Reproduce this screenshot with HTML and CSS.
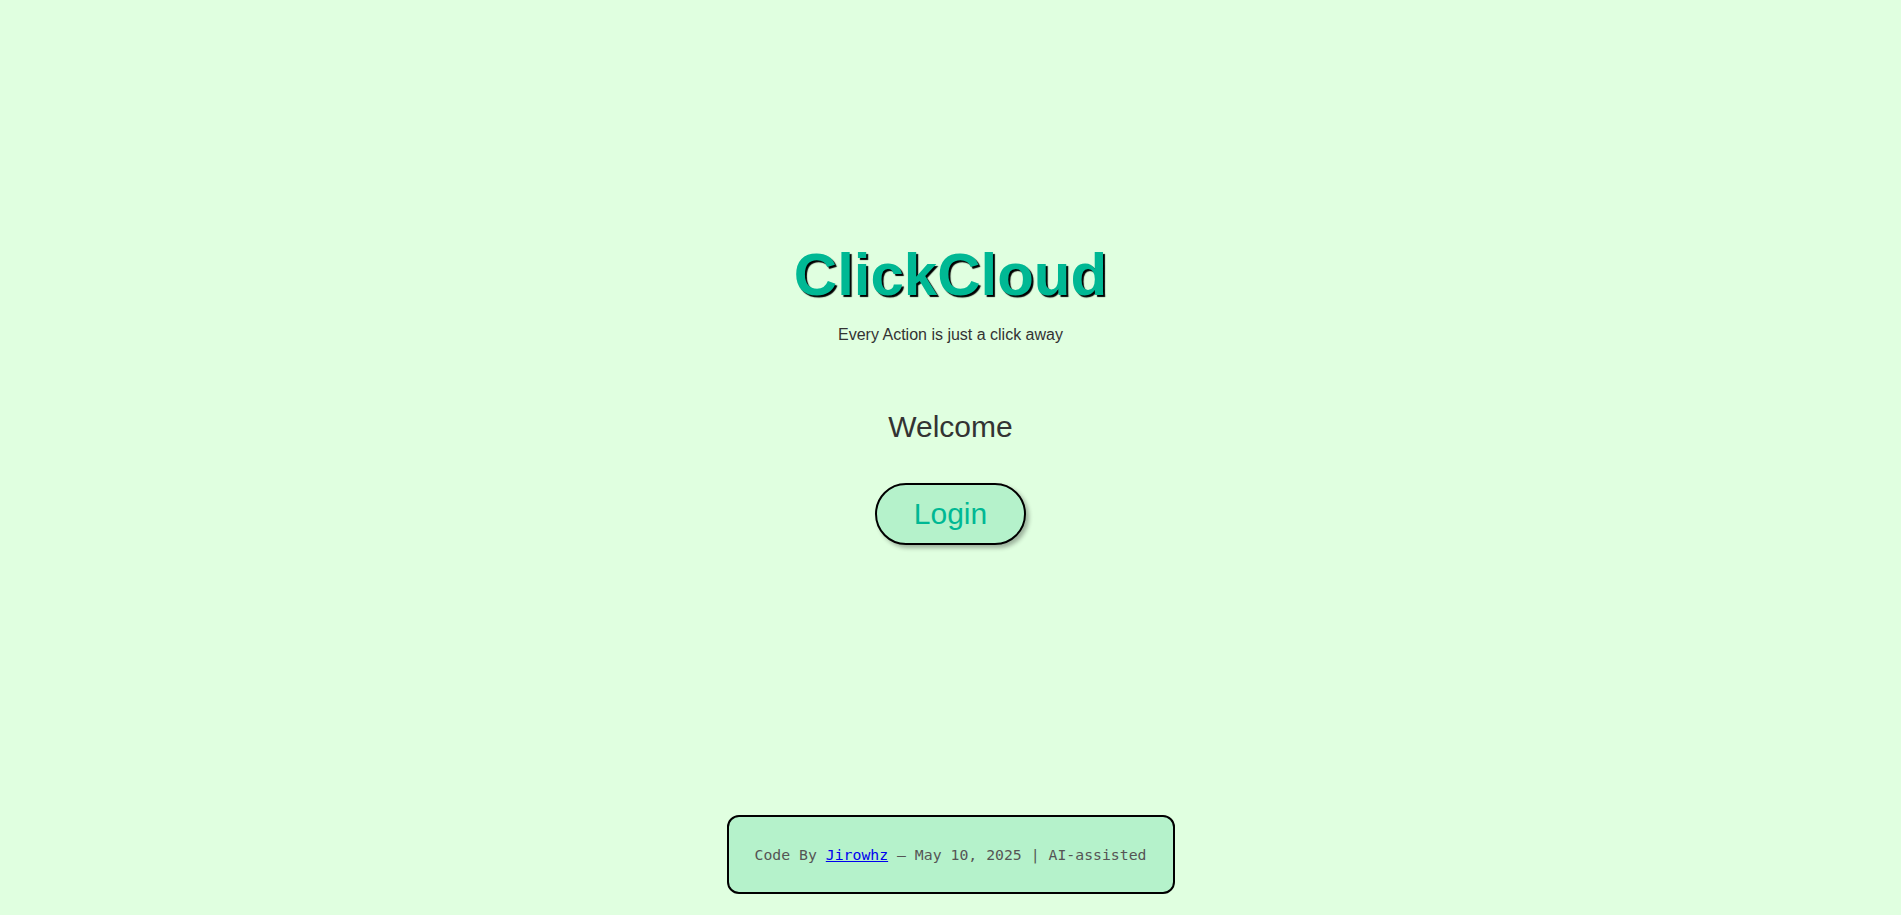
FILE: index.html
```html
<!DOCTYPE html>
<html lang="en">
<head>
<meta charset="utf-8">
<title>ClickCloud</title>
<link rel="stylesheet" href="styles.css">
</head>
<body>
  <main class="hero">
    <h1 class="brand">ClickCloud</h1>
    <p class="tagline">Every Action is just a click away</p>
    <h2 class="welcome">Welcome</h2>
    <button class="login-btn" type="button">Login</button>
  </main>
  <footer class="credit">
    <p class="credit-text">Code By <a href="#">Jirowhz</a> — May 10, 2025 | AI-assisted</p>
  </footer>
</body>
</html>
```
FILE: styles.css
```css
html, body {
  margin: 0;
  padding: 0;
}

body {
  background: #e0ffe0;
  font-family: "Liberation Sans", Arial, sans-serif;
  color: #333;
  min-height: 100vh;
  display: flex;
  flex-direction: column;
  align-items: center;
}

.hero {
  margin-top: 241px;
  display: flex;
  flex-direction: column;
  align-items: center;
  text-align: center;
}

.brand {
  margin: 0;
  font-size: 60px;
  line-height: 67px;
  font-weight: bold;
  color: #00b894;
  text-shadow: 2px 2px 1px #000;
}

.tagline {
  margin: 18px 0 0;
  font-size: 16px;
  line-height: 18px;
  color: #333;
}

.welcome {
  margin: 66px 0 0;
  font-size: 30px;
  line-height: 33px;
  font-weight: normal;
  color: #333;
}

.login-btn {
  margin-top: 40px;
  padding: 12px 37px;
  font-family: "Liberation Sans", Arial, sans-serif;
  font-size: 30px;
  line-height: 34px;
  color: #00b894;
  background: #b5f2cb;
  border: 2px solid #000;
  border-radius: 40px;
  box-shadow: 3px 3px 4px rgba(0, 0, 0, 0.3);
  cursor: pointer;
}

.credit {
  margin-top: auto;
  margin-bottom: 21px;
  box-sizing: border-box;
  width: 448px;
  height: 79px;
  display: flex;
  align-items: center;
  justify-content: center;
  background: #b5f2cb;
  border: 2px solid #000;
  border-radius: 12px;
}

.credit-text {
  margin: 0;
  font-family: "DejaVu Sans Mono", "Liberation Mono", monospace;
  font-size: 14.8px;
  color: #555;
}

.credit-text a {
  color: #0000ee;
  text-decoration: underline;
}
```
